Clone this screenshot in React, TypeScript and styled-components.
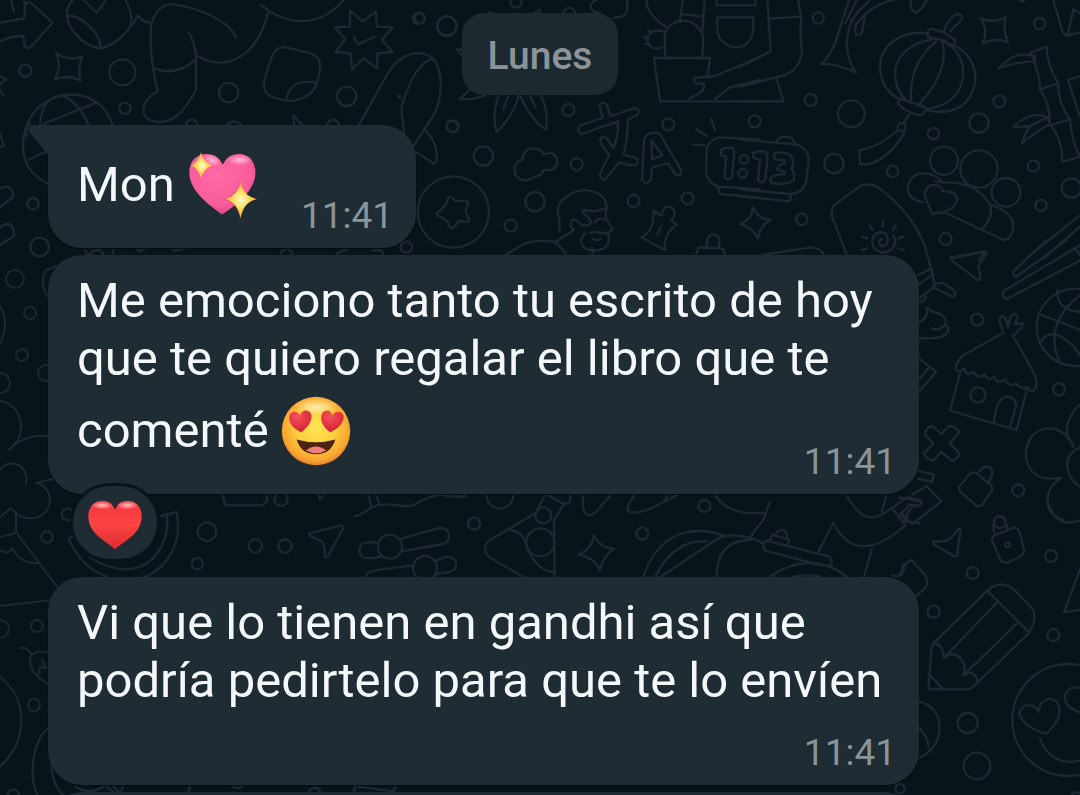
import React from "react";
import styled, { createGlobalStyle } from "styled-components";

const GlobalStyle = createGlobalStyle`
  *, *::before, *::after { box-sizing: border-box; }
  body {
    margin: 0;
    background: #08131a;
    font-family: Roboto, "Liberation Sans", sans-serif;
  }
`;

const Chat = styled.main`
  position: relative;
  min-height: 100vh;
  padding: 13px 161px 0 48px;
  overflow: hidden;
`;

const Wallpaper = styled.svg`
  position: absolute;
  top: 0;
  left: 0;
  width: 1080px;
  height: 795px;
  fill: none;
  stroke: #1f2830;
  stroke-linecap: round;
  stroke-linejoin: round;
`;

const Thread = styled.div`
  position: relative;
  display: flex;
  flex-direction: column;
  align-items: flex-start;
`;

const DayRow = styled.div`
  align-self: stretch;
  display: flex;
  justify-content: center;
  margin: 0 -161px 30px -48px;
`;

const DayChip = styled.time`
  padding: 19px 26px 15px;
  border-radius: 22px;
  background: #1d282f;
  color: #8b9599;
  font-size: 39px;
  font-weight: 500;
  line-height: 48px;
`;

const Bubble = styled.article<{ $gap?: number; $tailed?: boolean }>`
  position: relative;
  max-width: 100%;
  padding: 17px 23px 9px 29px;
  margin-bottom: ${(p) => p.$gap ?? 0}px;
  border-radius: ${(p) => (p.$tailed ? "0 34px 34px 34px" : "34px")};
  background: #202c33;
  box-shadow: 0 1px 1px #060d12;
`;

const Tail = styled.svg`
  position: absolute;
  top: 0;
  left: -20px;
  width: 21px;
  height: 32px;
  fill: #202c33;
`;

const Text = styled.p`
  display: flow-root;
  margin: 0;
  color: #f4f8fa;
  font-size: 49px;
  line-height: 58px;
`;

/* Holds a word and the emoji after it on the same line. */
const Together = styled.span`
  white-space: nowrap;
`;

/* The time floats beside the last line when it fits, and under it when it does not. */
const Time = styled.time<{ $drop: number }>`
  float: right;
  margin-top: ${(p) => p.$drop}px;
  margin-left: 44px;
  color: #8a9499;
  font-size: 37px;
  line-height: 47px;
`;

const Emoji = styled.svg`
  width: 70px;
  height: 70px;
  margin-top: 8px;
  vertical-align: -19px;
`;

const Reaction = styled.button`
  position: relative;
  display: flex;
  align-items: center;
  justify-content: center;
  width: 90px;
  height: 79px;
  margin: -11px 0 15px 22px;
  padding: 5px 0 0;
  border: 3px solid #08131a;
  border-radius: 42px;
  background: #202c33;
`;

const ReactionHeart = styled.svg`
  width: 54px;
  height: 50px;
`;

const NextPeek = styled.div`
  align-self: stretch;
  height: 3px;
  overflow: hidden;

  &::before {
    content: "";
    display: block;
    height: 80px;
    border-radius: 34px;
    background: #202c33;
  }
`;

type Dot = [number, number, number];

/* Doodles are drawn on sheets three times finer than the page. */
function Sheet({ x, y, dots, paths }: { x: number; y: number; dots: Dot[]; paths: string[] }) {
  return (
    <g transform={`translate(${x} ${y}) scale(0.33333)`} strokeWidth={7}>
      {dots.map(([cx, cy, r], i) => (
        <circle key={i} cx={cx} cy={cy} r={r} />
      ))}
      {paths.map((d, i) => (
        <path key={i} d={d} />
      ))}
    </g>
  );
}

const sheets: { x: number; y: number; dots: Dot[]; paths: string[] }[] = [
  {
    x: 0,
    y: 0,
    dots: [
      [76, 212, 18], [367, 217, 39], [375, 325, 17], [686, 278, 29], [1040, 289, 29],
      [1256, 55, 17], [1341, 78, 29], [1198, 290, 3], [1357, 379, 17], [575, 376, 17],
      [702, 392, 28], [999, 376, 17], [99, 611, 17], [119, 741, 28], [1219, 741, 17],
      [1360, 636, 107], [860, 764, 17],
    ],
    paths: [
      "M0 68 L72 56 L76 20 Q78 2 92 8 L158 68 L92 142 Q74 148 72 132 L70 108 Q30 108 0 124 M34 0 L42 36 M72 0 L76 20",
      "M250 0 L290 38 L318 0 M376 0 Q408 60 384 90 Q350 132 304 145 Q252 142 212 82 Q190 42 208 14 L218 0 M204 48 C230 40 302 92 302 144",
      "M396 76 L414 46 Q426 66 450 68",
      "M168 160 Q206 184 246 170 Q232 206 242 242 Q206 222 164 238 Q188 200 168 160 Z",
      "M708 112 C684 60 600 28 540 16 C490 4 458 32 452 90 Q450 190 474 274 C440 290 424 320 432 342 C446 372 500 372 530 348 Q562 320 588 270 L588 166 Q584 130 566 96 M460 204 Q524 232 586 180 M588 166 C680 220 770 170 804 40 M782 14 C860 80 960 84 1030 0",
      "M858 142 L924 158 Q964 168 960 206 Q952 270 926 284 Q884 314 832 296 Q782 284 794 238 L814 174 Q828 138 858 142 Z M858 298 Q874 234 944 248",
      "M1050 32 L1088 64 L1128 34 L1130 80 L1178 82 L1146 120 L1178 156 L1132 160 L1132 206 L1090 174 L1056 208 L1052 160 L1006 156 L1036 118 L1004 82 L1050 80 Z M1062 112 L1074 134 L1124 110",
      "M1076 376 L1162 222 C1204 154 1260 146 1300 176 C1330 214 1328 290 1304 340 L1240 438 M1212 400 L1204 324 C1222 260 1250 186 1300 176 M1272 388 C1312 420 1318 480 1302 492 Q1270 468 1232 448",
      "M338 376 C310 280 200 260 132 310 C60 360 50 470 100 520 Q120 540 146 552 M120 376 C122 330 140 290 186 286 M186 286 Q236 306 266 376 M130 372 L284 310 M80 410 Q74 390 90 370 M86 480 L146 450",
      "M0 228 L18 238 L0 252 M0 270 L10 286 M0 400 L12 438 L0 440",
      "M0 566 Q22 552 36 570 Q46 590 30 598 L0 622 M0 682 Q24 664 36 678 Q46 696 40 710 L0 734",
      "M882 376 L880 346 L908 376",
      "M254 744 L262 770 Q300 730 312 770 M342 744 L336 770 M410 744 L420 754 L436 746 M512 744 L524 752 L560 744 M1010 760 L1040 748 M1120 752 Q1150 744 1150 766",
    ],
  },
  {
    x: 420,
    y: 0,
    dots: [
      [80, 78, 29], [288, 6, 17], [448, 40, 17], [445, 330, 18], [98, 379, 18], [190, 468, 29],
      [470, 493, 18], [345, 605, 29], [272, 677, 18], [745, 373, 18], [641, 603, 18], [803, 595, 18],
      [0, 55, 15],
    ],
    paths: [
      "M110 148 L130 150 M110 148 L126 166 M206 40 L212 36 L216 44 M340 42 L360 28 L362 44",
      "M150 268 L118 298 Q160 300 196 286 M236 286 C220 330 222 370 230 396 C260 370 290 320 296 286 M264 290 L250 328 M302 290 C320 330 346 370 378 388 Q386 330 362 286 M330 288 L346 322",
      "M530 0 Q506 10 514 26 Q522 40 540 38 M620 0 Q630 40 604 50 L580 54",
      "M680 0 Q676 40 740 82 M788 0 L780 66 M854 0 L846 104 M784 42 L852 50 M736 174 L734 110 C736 80 764 62 792 62 C826 64 850 94 850 124 L846 174 M702 174 H870 L862 230 M702 174 L720 304 H1020",
      "M734 94 Q700 86 686 104 Q676 126 694 142 Q712 150 726 142 M694 98 L684 90 M684 114 L672 112 M684 130 L674 134",
      "M1020 172 L884 228 L824 234 Q816 248 832 250 L852 252 Q854 274 834 282 L808 296 M884 298 L930 262 L1020 240",
      "M890 0 V16 H1006 V0 M892 52 H1000 V90 C996 128 968 144 944 142 C914 138 892 116 892 86 Z",
      "M286 524 Q276 490 306 480 Q314 440 346 446 Q366 448 370 464 Q404 450 412 480 Q414 506 386 512 Q370 504 362 524 Q346 530 338 534 Q306 552 286 524 Z",
      "M484 402 L594 364 Q596 410 580 444 L560 414 Q544 404 540 422 Q546 440 568 464 L540 520 Q540 540 556 538 L598 486 Q626 500 648 494 Q660 480 644 472 L610 464 Q622 430 624 358 L650 346 Q664 330 646 324 L572 348 L560 314 Q544 300 538 318 L548 354 L480 376 Q466 394 484 402 Z",
      "M666 540 L672 420 Q680 396 704 398 Q720 400 726 412 L782 508 Q788 528 768 526 L744 490 L696 502 L692 540 Q680 558 666 540 Z M694 422 L696 478 L728 466 Z",
      "M872 356 L886 390 M830 388 L860 408 M818 434 L854 436",
      "M1020 418 L900 412 Q868 418 860 446 L858 520 Q864 550 896 560 L1020 568 M896 564 V578 Q900 584 920 584 L1020 594",
      "M902 450 Q914 440 936 444 Q944 450 942 470 L936 530 Q922 546 914 530 L918 470 L904 466 Z",
      "M418 694 Q420 660 416 652 Q404 610 440 590 Q480 560 524 576 Q560 590 560 624 L524 634 L488 630 Q490 644 506 652 L514 668 Q506 680 484 676 Q466 650 454 664 Q446 680 462 690 L406 726 Q340 716 300 738 L256 766 M406 726 Q430 750 440 764 M560 624 L556 650 L578 690 Q560 704 540 698 Q520 692 510 700 M524 668 Q536 650 552 660 M496 700 Q474 720 490 742 Q520 760 554 744 Q572 730 564 704 M520 716 Q530 726 542 716 M516 744 L518 764",
      "M700 632 L716 640 M754 662 L770 674 Q730 700 734 750 L664 712 Q704 694 700 632 Q712 644 726 646 Q728 618 750 620 Q770 630 762 648 L754 662 M722 682 L712 704",
      "M828 764 L836 742 L910 746 L914 764 M860 738 Q858 702 884 704 Q904 708 896 742",
      "M50 640 Q80 620 84 594 Q92 584 104 602 L142 604 Q148 610 136 630 L148 660 Q142 672 118 662 L100 684 Q90 690 82 664 L50 644 Z",
    ],
  },
  {
    x: 740,
    y: 0,
    dots: [
      [235, 54, 17], [899, 71, 17], [212, 300, 18], [334, 341, 40], [778, 304, 18], [717, 369, 29],
      [580, 401, 17], [44, 364, 18], [282, 491, 29], [458, 514, 17], [612, 482, 42], [717, 507, 56],
      [798, 577, 43], [880, 498, 17], [994, 564, 29], [903, 616, 17], [617, 717, 18], [185, 658, 17],
      [485, 381, 12], [846, -4, 8], [12, 478, 13], [8, 520, 13],
    ],
    paths: [
      "M82 0 L92 154 L0 200 M90 56 L182 50 M174 0 L184 50 Q178 100 186 150 C184 190 164 214 132 226 L0 260 M110 236 L130 304 H0",
      "M328 0 C296 80 292 150 244 192 Q290 190 348 218 C300 150 320 60 370 20 L390 0 M350 70 Q400 10 460 0 M350 70 C336 100 356 116 366 96 L376 40 M350 0 L316 70 M512 0 Q510 34 530 38 Q552 20 560 0",
      "M564 100 C480 88 420 140 420 200 C420 250 450 286 480 298 M576 118 C500 130 460 180 466 230 Q470 280 500 300 M588 124 C530 170 506 240 514 306 M606 126 C630 200 570 280 532 318 M614 126 C680 160 680 240 650 280 Q620 320 562 326 M650 140 C700 170 716 220 700 268 C680 330 620 346 560 330",
      "M572 86 Q610 92 646 120 L642 138 L610 122 L562 110 Q562 90 572 86 Z M612 94 Q622 56 650 42 Q672 44 664 60 L630 94 M480 296 L556 322 Q554 344 540 346 Q500 338 474 312 Z M506 346 L490 370 M474 390 Q420 440 358 452 L360 492 C420 500 470 440 494 396",
      "M722 56 Q762 72 798 50 Q786 88 804 126 Q766 112 728 130 Q746 92 722 56 Z M940 0 L968 96 Q980 114 990 104 L1020 98 M984 102 L1000 28 L1020 40",
      "M776 204 L812 174 Q850 156 884 168 L886 184 Q840 184 776 204 Z M872 158 L920 140 Q920 190 954 250 Q954 310 990 358 Q994 420 1020 470 L966 486 Q970 420 930 372 Q930 310 900 268 Q900 220 872 158 M900 268 L954 250 M930 376 L990 358 M820 382 Q870 330 922 352 L930 372 Q880 400 846 430 Q858 396 870 378 Z M1020 228 L984 240 Q1000 290 1020 350 M870 378 Q900 364 922 352",
      "M0 418 L172 434 Q210 450 206 486 L198 550 Q184 582 150 582 L0 568 M108 426 Q116 408 140 410 Q164 414 164 432 M0 588 L148 604 L154 586",
      "M38 460 Q50 450 76 456 Q84 460 82 480 L76 540 Q64 554 54 540 L60 480 L42 474 Z M106 458 Q154 454 158 480 Q162 500 154 506 Q168 520 160 542 Q130 558 94 548 Q84 530 104 526 L134 522 L134 516 L112 508 Q112 494 134 490 L132 480 L106 478 Q98 464 106 458 Z",
      "M38 622 Q56 660 92 660 Q58 680 54 716 Q36 680 0 672 Q36 660 38 622 Z M70 764 L212 742 Q240 742 252 764",
      "M320 764 L276 650 Q270 624 290 610 L360 558 Q390 546 420 566 Q540 660 566 780 M460 706 C480 742 440 762 420 756 C390 744 388 704 420 696 C450 696 450 738 428 738 C414 736 414 716 426 718 M429 664 V680 M388 676 L398 690 M468 676 L458 690 M366 710 L382 716 M490 710 L474 716 M366 750 L382 744 M490 750 L474 744",
      "M548 606 Q506 600 502 566 Q512 516 556 520 Q590 524 610 548 Q700 540 750 612 Q820 640 820 676 Q816 720 790 720 L612 636 M750 612 Q762 650 728 686 M576 642 C566 610 554 600 554 580 Q562 550 590 556 Q606 560 608 574 Q650 572 652 600 Q646 624 612 636 Z M606 546 L588 544",
      "M864 770 L1020 646 M910 776 L1020 680 M632 772 L738 754 L716 780",
    ],
  },
  {
    x: 900,
    y: 240,
    dots: [
      [231, 239, 18], [234, 465, 23], [477, 448, 18], [355, 751, 18], [300, 846, 18],
      [526, 262, 116],
    ],
    paths: [
      "M152 56 L256 34 Q262 38 256 46 L234 80 Q244 100 240 118 Q236 124 228 116 L156 62 Z",
      "M440 0 L340 94 Q338 110 352 108 L500 0 M540 16 L312 152 Q302 170 318 178 L540 62 M526 26 L540 44",
      "M86 60 Q100 100 104 138 L60 174 M54 106 L92 86 M56 134 L98 104 M104 134 Q118 124 134 132 L158 148 Q170 158 164 168 Q156 174 140 162 L104 144 M62 184 Q74 188 78 170",
      "M58 246 Q86 236 80 202 Q94 216 120 222 Q140 230 136 254 Q150 264 142 280 Q120 300 60 294 M94 266 Q120 272 134 256 M58 356 L108 396 L58 454 M58 416 L86 384",
      "M304 282 L190 346 Q164 370 168 390 Q180 402 190 384 Q200 412 222 396 Q232 420 254 402 Q262 426 284 410 Q290 436 314 418 Q326 442 348 430 Q360 448 384 442 Q394 464 408 442 Q414 420 400 396 L338 286 M312 280 Q290 236 304 228 Q318 226 324 262 Q330 220 346 222 Q360 226 344 252 L370 250 Q374 256 338 288 M180 400 L150 512 L350 570 L380 450 M282 548 Q288 480 316 470 Q350 470 348 500 L330 560",
      "M124 582 L146 558 Q168 558 178 576 L150 610 L178 640 Q172 662 154 662 L124 636 L100 662 Q74 656 72 640 L100 610 L74 582 Q80 558 98 558 Z",
      "M230 700 Q216 692 206 706 L178 740 Q174 750 184 758 L230 798 Q240 802 248 792 L276 752 Q280 744 270 734 Z M236 696 Q252 674 270 682 Q286 694 266 728 M54 692 L102 704 L96 726 L54 716",
      "M418 222 C480 246 510 256 540 270 M472 150 Q468 210 540 216 M540 166 C480 210 440 280 478 362 M424 304 Q440 270 484 290 Q520 310 540 346",
      "M520 622 C500 560 430 550 396 588 C360 640 380 700 430 714 Q460 718 484 714 M540 494 Q490 540 504 590 M540 622 Q500 640 502 680 Q504 716 540 740 M484 714 Q440 740 442 790 Q450 830 490 840",
      "M0 774 Q30 776 64 786 Q66 800 44 798 Q20 810 20 834 L0 820 M36 764 L80 738 L124 784 L40 850",
    ],
  },
  {
    x: 900,
    y: 500,
    dots: [
      [323, 135, 7], [453, 168, 18], [218, 219, 18], [101, 335, 18], [460, 405, 18],
      [203, 669, 30], [231, 798, 40], [505, 660, 168], [0, 866, 14], [530, 892, 16],
    ],
    paths: [
      "M442 0 Q460 66 508 68 L540 62 M0 44 L38 72",
      "M98 124 Q130 126 144 120 Q160 110 172 90 Q182 82 182 96 Q174 130 172 164 Q166 172 158 166 L102 134 Z",
      "M284 106 L344 82 Q356 86 360 100 L372 150 Q372 164 358 172 L322 188 Q306 188 300 178 L276 120 Q276 110 284 106 Z M282 98 Q276 60 290 50 Q310 44 318 70 L322 84",
      "M0 220 Q20 210 8 196 L34 180 L76 226 Q88 250 74 266 L48 288 M540 208 L492 336 L540 330",
      "M100 430 L262 272 Q304 234 348 274 L398 328 Q412 358 388 398 L226 554 Q214 568 200 568 H92 Q84 568 86 556 L94 450 Z M262 272 L388 398 M292 306 L132 474 M352 370 L190 526 M108 430 Q130 440 132 474 Q164 450 186 480 Q200 500 190 526 Q220 510 230 534 Q236 548 220 560 M86 522 L128 566",
      "M54 604 C140 620 140 740 56 774 M56 682 Q84 710 86 744",
      "M438 702 Q366 680 358 640 C362 610 402 606 416 636 C418 600 456 580 474 612 C490 650 460 680 438 702 Z M420 716 C440 774 490 794 540 782 M540 564 C500 554 484 590 504 618 Q520 630 540 638",
    ],
  },
  {
    x: 0,
    y: 470,
    dots: [
      [141, 201, 17], [203, 133, 18], [621, 185, 28], [592, 281, 17], [766, 228, 20],
      [855, 228, 20], [843, 88, 20], [1170, 230, 36], [1275, 294, 36],
    ],
    paths: [
      "M672 72 Q664 90 680 106 H786 Q808 96 798 72 M954 72 L960 88 L972 74 M1086 72 L1106 74 L1114 112 M1128 72 L1138 102 M1064 138 Q1080 138 1114 112 C1160 90 1200 116 1240 106 Q1290 74 1330 74 L1380 82",
      "M928 190 L1024 166 Q1034 170 1026 182 L984 258 Q978 268 974 258 Q976 222 962 212 L930 198 Z",
      "M1136 218 Q1100 214 1086 222 Q1072 240 1084 258 Q1096 270 1142 260 M1204 206 L1310 176 Q1340 168 1346 190 Q1350 216 1330 222 L1206 244 M1098 322 Q1100 306 1120 302 L1238 286 M1308 272 L1340 260 Q1366 262 1368 280 Q1370 300 1350 306 L1306 312",
      "M484 138 L530 126 Q546 210 500 270 Q470 310 430 322 M502 140 C506 220 460 300 370 298 Q310 290 270 262 M206 206 Q240 290 320 320 M206 206 L216 200",
    ],
  },
  {
    x: 440,
    y: 480,
    dots: [
      [102, 131, 18], [180, 46, 40], [310, 106, 24], [301, 187, 42],
      [607, 161, 18], [793, 78, 18],
    ],
    paths: [
      "M0 42 Q30 54 78 48 M316 42 L288 98 L150 180 Q130 194 138 220 Q150 236 250 290 M372 70 L342 122 L344 290 M318 42 L368 70 Q392 76 392 52 L388 42 M208 150 C244 150 256 180 264 210 Q296 276 344 276",
      "M432 42 Q420 100 448 106 Q470 100 484 76 L516 42 M586 42 Q550 90 570 96 Q600 104 664 70 L716 42 M684 42 L674 64",
      "M462 166 Q480 206 522 206 Q486 230 480 270 Q462 232 416 224 Q454 210 462 166 Z",
      "M822 42 C860 96 910 104 976 98 M990 66 L968 124 Q950 140 932 172 M610 290 C650 170 740 130 850 166 M646 290 C680 220 730 180 800 184 M662 290 L830 178 Q880 150 966 188 M830 290 C830 220 860 180 932 180",
      "M978 182 L1168 230 Q1180 240 1172 256 L1144 256 L976 212 Q962 196 978 182 Z M992 178 L994 164 L1048 178 L1044 192 M1006 166 Q1012 148 1030 150 Q1044 158 1040 174 M990 290 Q1080 230 1160 258 Q1190 266 1220 290 M1060 290 Q1100 282 1140 290",
      "M1136 214 L1180 128 C1220 210 1290 230 1396 136 L1356 84 C1320 110 1290 124 1262 100 Q1240 80 1216 42 M1340 42 L1326 94 M1296 206 L1272 290 M1356 84 L1402 52 L1440 60 M1440 76 L1406 74 Q1398 90 1386 96 L1396 124 L1440 130 M1356 286 Q1396 296 1386 262 L1412 240",
    ],
  },
  {
    x: 0,
    y: 740,
    dots: [[40, 166, 17], [944, 160, 17]],
    paths: [
      "M0 80 Q40 44 54 0 M118 0 C94 50 90 120 112 165 M154 80 Q160 140 190 165 M226 140 Q270 166 310 140 M318 138 L344 160 M340 138 L358 160 L370 138 M570 138 L564 160 M696 136 Q712 152 730 136 M1066 138 L1060 160 M1074 140 L1180 154 M1186 138 L1180 160",
    ],
  },
];

const edgeDots: Dot[] = [
  [15, 279, 9], [30, 313, 6], [22, 355, 6], [0, 383, 10], [46, 373, 8],
  [37, 626, 6], [0, 629, 9], [34, 705, 6],
];

const edgePaths = [
  "M0 306 Q10 322 0 344 M0 401 C18 404 26 422 18 440 L9 450 Q24 434 48 436",
  "M50 300 Q38 284 46 270 L56 266",
  "M0 470 C10 456 30 466 26 484 M53 479 L36 483 C54 486 56 514 34 518 Q20 520 11 508 L0 517 M16 512 V532 L58 588 M0 537 L16 533 M0 550 Q8 556 12 548 Q20 564 38 563 M0 606 L52 600",
  "M20 648 Q28 646 32 656 M50 653 Q32 648 30 660 Q30 674 48 684 M42 660 L46 668 L40 667 L38 676",
  "M0 677 C20 692 26 716 18 740 M48 729 Q42 733 39 740",
];

function Doodles() {
  return (
    <Wallpaper viewBox="0 0 1080 795" aria-hidden="true">
      {sheets.map((s, i) => (
        <Sheet key={i} {...s} />
      ))}
      <g strokeWidth={2}>
        {edgeDots.map(([cx, cy, r], i) => (
          <circle key={i} cx={cx} cy={cy} r={r} />
        ))}
        {edgePaths.map((d, i) => (
          <path key={i} d={d} />
        ))}
      </g>
    </Wallpaper>
  );
}

function SparklingHeart() {
  return (
    <Emoji viewBox="0 0 90 90" role="img" aria-label="Corazón brillante">
      <defs>
        <radialGradient id="pink" cx="0.45" cy="0.35" r="0.7">
          <stop offset="0" stopColor="#ff6aa5" />
          <stop offset="0.7" stopColor="#f95c9b" />
          <stop offset="1" stopColor="#d94086" />
        </radialGradient>
        <radialGradient id="spark">
          <stop offset="0" stopColor="#fffbd0" />
          <stop offset="0.4" stopColor="#fde36a" />
          <stop offset="1" stopColor="#f2a92c" />
        </radialGradient>
        <radialGradient id="gloss">
          <stop offset="0" stopColor="#fff" stopOpacity="0.6" />
          <stop offset="1" stopColor="#fff" stopOpacity="0" />
        </radialGradient>
      </defs>
      <path fill="url(#pink)" d="M45 83 C29 71 3 53 3 29 C3 13 13 5 25 5 C35 5 42 10 46 19 C50 10 57 5 67 5 C80 5 88 15 88 29 C88 53 61 73 45 83 Z" />
      <ellipse cx="32" cy="13" rx="11" ry="7" fill="url(#gloss)" transform="rotate(20 32 13)" />
      <ellipse cx="68" cy="13" rx="16" ry="7" fill="url(#gloss)" />
      <path fill="#b8405f" fillOpacity="0.45" d="M68 40 Q70 59 89 64 Q71 68 68 89 Q64 68 47 63 Q64 59 68 40 Z" />
      <path fill="url(#spark)" d="M69 41 Q72 59 90 63 Q72 67 69 88 Q65 67 49 63 Q65 59 69 41 Z" />
      <path fill="url(#spark)" d="M18 3 Q20 16 33 20 Q21 23 18 37 Q15 23 5 20 Q15 16 18 3 Z" />
    </Emoji>
  );
}

function HeartEyes() {
  const heart = "M0 12 C-7 8 -13 2 -12 -6 C-11 -13 -2 -14 0 -7 C3 -14 12 -13 13 -6 C13 2 6 8 0 12 Z";
  return (
    <Emoji viewBox="0 0 90 90" role="img" aria-label="Cara con ojos de corazón">
      <defs>
        <radialGradient id="face" cx="0.5" cy="0.45" r="0.55">
          <stop offset="0" stopColor="#ffe650" />
          <stop offset="0.5" stopColor="#fdd040" />
          <stop offset="0.88" stopColor="#f9a52f" />
          <stop offset="1" stopColor="#e6812b" />
        </radialGradient>
        <radialGradient id="eye" cx="0.4" cy="0.25" r="0.8">
          <stop offset="0" stopColor="#f4525a" />
          <stop offset="0.6" stopColor="#e2303f" />
          <stop offset="1" stopColor="#bd1c30" />
        </radialGradient>
        <radialGradient id="brow">
          <stop offset="0" stopColor="#fff" stopOpacity="0.6" />
          <stop offset="1" stopColor="#fff" stopOpacity="0" />
        </radialGradient>
      </defs>
      <circle cx="45" cy="45" r="44" fill="url(#face)" />
      <ellipse cx="45" cy="14" rx="28" ry="11" fill="url(#brow)" />
      <path d={heart} fill="url(#eye)" transform="translate(25 33) rotate(-6) scale(1.15)" />
      <path d={heart} fill="url(#eye)" transform="translate(65 33) rotate(6) scale(1.15)" />
      <path fill="#4a2411" d="M20 56 Q45 63 70 56 Q64 75 45 75 Q26 75 20 56 Z" />
      <path fill="#ef8080" d="M32 70 Q45 60 58 70 Q46 77 32 70 Z" />
    </Emoji>
  );
}

function RedHeart() {
  return (
    <ReactionHeart viewBox="0 0 160 145" aria-hidden="true">
      <defs>
        <linearGradient id="red" x1="0" y1="0" x2="0" y2="1">
          <stop offset="0" stopColor="#f5383e" />
          <stop offset="0.5" stopColor="#fb4444" />
          <stop offset="1" stopColor="#dc2c2e" />
        </linearGradient>
        <radialGradient id="shine">
          <stop offset="0" stopColor="#fff" stopOpacity="0.7" />
          <stop offset="1" stopColor="#fff" stopOpacity="0" />
        </radialGradient>
      </defs>
      <path fill="url(#red)" d="M80 144 C55 120 2 100 1 47 C1 16 22 1 43 1 C62 1 74 12 80 28 C86 12 98 1 117 1 C140 1 159 18 159 47 C158 100 106 120 80 144 Z" />
      <ellipse cx="42" cy="14" rx="32" ry="12" fill="url(#shine)" />
      <ellipse cx="117" cy="14" rx="32" ry="12" fill="url(#shine)" />
    </ReactionHeart>
  );
}

export default function App() {
  return (
    <>
      <GlobalStyle />
      <Chat>
        <Doodles />
        <Thread>
          <DayRow>
            <DayChip>Lunes</DayChip>
          </DayRow>
          <Bubble $tailed $gap={7}>
            <Tail viewBox="0 0 21 32" aria-hidden="true">
              <path d="M5 0 H21 V31 L2 8 C-1 4 1 0 5 0 Z" />
            </Tail>
            <Text>
              <Together>
                Mon <SparklingHeart />
              </Together>
              <Time $drop={50}>11:41</Time>
            </Text>
          </Bubble>
          <Bubble>
            <Text>
              Me emociono tanto tu escrito de hoy que te quiero regalar el libro que te{" "}
              <Together>
                comenté <HeartEyes />
              </Together>
              <Time $drop={50}>11:41</Time>
            </Text>
          </Bubble>
          <Reaction type="button" aria-label="Reacción: corazón">
            <RedHeart />
          </Reaction>
          <Bubble $gap={7}>
            <Text>
              Vi que lo tienen en gandhi así que podría pedirtelo para que te lo envíen
              <Time $drop={19}>11:41</Time>
            </Text>
          </Bubble>
          <NextPeek />
        </Thread>
      </Chat>
    </>
  );
}
